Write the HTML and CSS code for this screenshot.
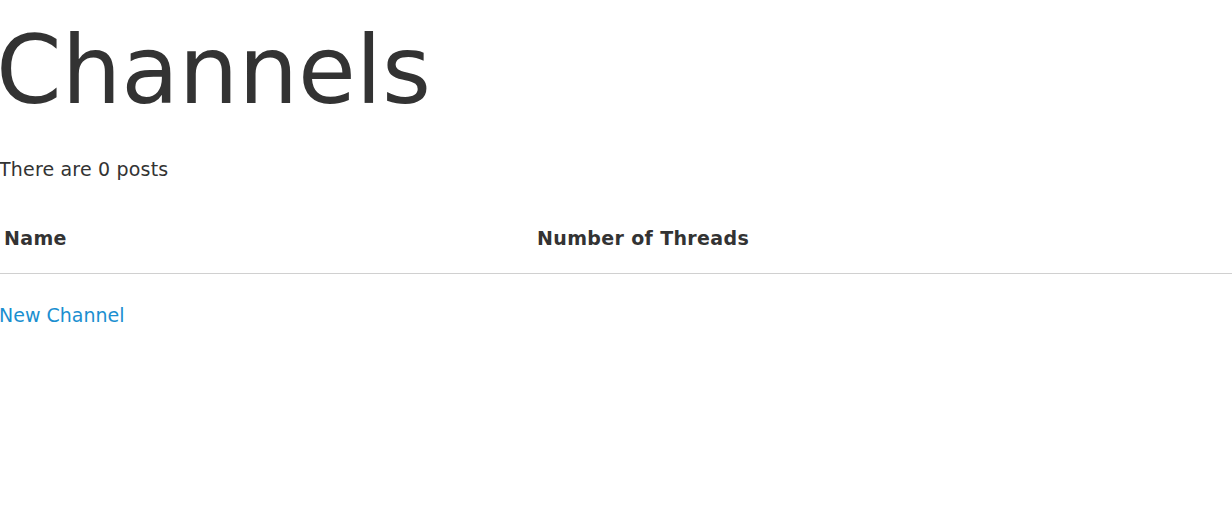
FILE: index.html
```html
<!DOCTYPE html>
<html>
<head>
<meta charset="utf-8">
<link rel="stylesheet" href="styles.css">
</head>
<body>
<main class="page">
  <h1 class="title">Channels</h1>
  <p class="count">There are 0 posts</p>
  <table class="channels">
    <thead>
      <tr>
        <th class="col-name">Name</th>
        <th class="col-threads">Number of Threads</th>
      </tr>
    </thead>
    <tbody></tbody>
  </table>
  <a class="new-link" href="#">New Channel</a>
</main>
</body>
</html>
```

FILE: styles.css
```css
html, body {
  margin: 0;
  padding: 0;
  background: #fff;
}
body {
  font-family: "DejaVu Sans", Verdana, sans-serif;
  color: #333;
  font-size: 19px;
}
.page {
  display: flex;
  flex-direction: column;
  align-items: flex-start;
  margin-left: -1px;
}
.title {
  font-size: 94px;
  font-weight: normal;
  line-height: 113px;
  margin: 14px 0 0 -3px;
}
.count {
  margin: 31px 0 0 0;
  line-height: 22px;
  letter-spacing: 0.18px;
}
.channels {
  margin-top: 24px;
  width: 1233px;
  border-collapse: collapse;
}
.channels th {
  text-align: left;
  font-weight: bold;
  line-height: 22px;
  letter-spacing: 0.35px;
  padding: 23px 4px 24px 5px;
  border-bottom: 1px solid #d0d0d0;
}
.col-name {
  width: 524px;
}
.new-link {
  margin-top: 30px;
  line-height: 22px;
  color: #1b8fd0;
  text-decoration: none;
}
```
